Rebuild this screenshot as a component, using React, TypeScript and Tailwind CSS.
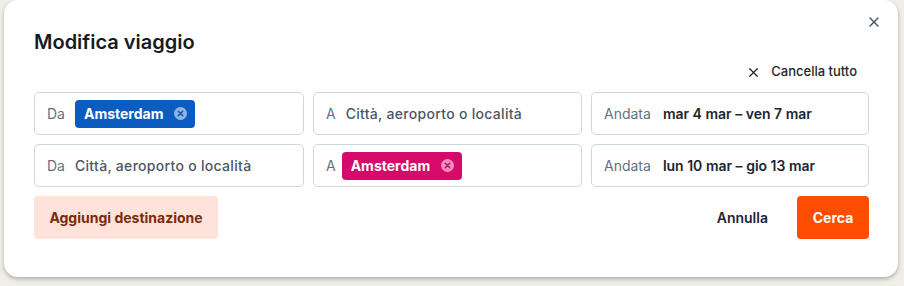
import { X } from 'lucide-react'

const ChipClose = ({ color }: { color: string }) => (
  <svg width="13" height="13" viewBox="0 0 14 14" className="shrink-0">
    <circle cx="7" cy="7" r="7" fill="white" fillOpacity="0.55" />
    <path
      d="M4.6 4.6 9.4 9.4M9.4 4.6 4.6 9.4"
      stroke={color}
      strokeWidth="1.8"
      strokeLinecap="round"
    />
  </svg>
)

const Chip = ({ bg, color }: { bg: string; color: string }) => (
  <div
    className={`flex h-[28px] items-center gap-x-[11px] rounded-[4px] pr-[8px] pl-[9px] ${bg}`}
  >
    <span className="text-[14px] font-bold text-white">Amsterdam</span>
    <ChipClose color={color} />
  </div>
)

const Field = ({ children }: { children: React.ReactNode }) => (
  <div className="flex h-[43px] items-center rounded-[5px] border border-[#cdd6e2] bg-white px-[12px]">
    {children}
  </div>
)

const Label = ({ text }: { text: string }) => (
  <span className="mr-[10px] text-[14px] text-[#66717f]">{text}</span>
)

const Placeholder = () => (
  <span className="text-[14px] font-medium tracking-[0.3px] text-[#4c5765]">
    Città, aeroporto o località
  </span>
)

const DateText = ({ text }: { text: string }) => (
  <span className="ml-[2px] text-[14px] font-semibold text-[#1e2530]">{text}</span>
)

export default function App() {
  return (
    <div
      className="h-[286px] w-[904px] bg-[#f0efe7] pl-[4px]"
      style={{ fontFamily: 'Inter, "Noto Sans", sans-serif' }}
    >
      <div className="relative h-[277px] w-[894px] rounded-[14px] bg-white pt-[28px] pr-[29px] pl-[30px] shadow-[0_2px_4px_rgba(0,0,0,0.28)]">
        <button className="absolute top-[14px] right-[16px] text-[#4a5565]">
          <X size={16} strokeWidth={2} />
        </button>

        <h1 className="text-[20px] leading-[28px] font-semibold text-[#161b22]">
          Modifica viaggio
        </h1>

        <div className="mt-[6px] flex h-[20px] items-center justify-end gap-x-[10px] pr-[12px]">
          <X size={15} strokeWidth={2} className="text-[#1e2530]" />
          <span className="text-[13px] font-medium text-[#1e2530]">
            Cancella tutto
          </span>
        </div>

        <div className="mt-[10px] grid grid-cols-[270px_269px_278px] gap-[9px]">
          <Field>
            <Label text="Da" />
            <Chip bg="bg-[#0a5cc0]" color="#0a5cc0" />
          </Field>
          <Field>
            <Label text="A" />
            <Placeholder />
          </Field>
          <Field>
            <Label text="Andata" />
            <DateText text="mar 4 mar – ven 7 mar" />
          </Field>

          <Field>
            <Label text="Da" />
            <Placeholder />
          </Field>
          <Field>
            <span className="mr-[6px] text-[14px] text-[#66717f]">A</span>
            <Chip bg="bg-[#d60a6a]" color="#d60a6a" />
          </Field>
          <Field>
            <Label text="Andata" />
            <DateText text="lun 10 mar – gio 13 mar" />
          </Field>
        </div>

        <div className="mt-[9px] flex items-center">
          <button className="h-[43px] w-[184px] rounded-[4px] bg-[#ffe3da] text-[14px] font-bold text-[#7a2b0c]">
            Aggiungi destinazione
          </button>
          <button className="mr-[29px] ml-auto text-[14px] font-semibold text-[#1e2530]">
            Annulla
          </button>
          <button className="h-[43px] w-[72px] rounded-[4px] bg-[#ff4d00] text-[14px] font-bold text-white">
            Cerca
          </button>
        </div>
      </div>
    </div>
  )
}
